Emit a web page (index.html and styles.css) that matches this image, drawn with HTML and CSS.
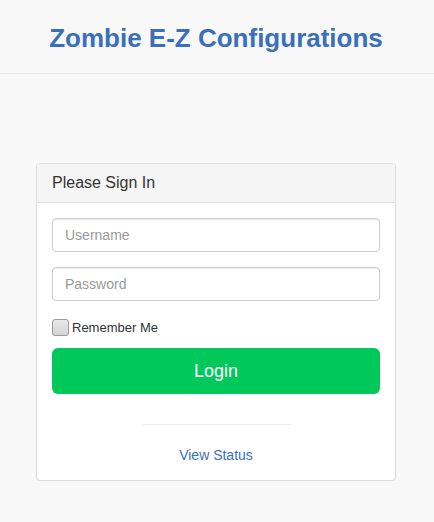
FILE: index.html
```html
<!DOCTYPE html>
<html>
<head>
<meta charset="utf-8">
<link rel="stylesheet" href="styles.css">
</head>
<body>
<header class="topbar">
  <h1 class="title">Zombie E-Z Configurations</h1>
</header>
<main class="main">
  <div class="panel">
    <div class="panel-heading">Please Sign In</div>
    <div class="panel-body">
      <input class="field" type="text" placeholder="Username">
      <input class="field" type="password" placeholder="Password">
      <label class="remember"><input class="check" type="checkbox"><span>Remember Me</span></label>
      <button class="btn-login" type="button">Login</button>
      <hr class="divider">
      <div class="status"><a class="status-link" href="#">View Status</a></div>
    </div>
  </div>
</main>
</body>
</html>
```

FILE: styles.css
```css
html, body {
  margin: 0;
  padding: 0;
  background: #f8f8f8;
  font-family: "Liberation Sans", Arial, sans-serif;
  color: #333;
}
.topbar {
  height: 73px;
  border-bottom: 1px solid #e7e7e7;
  display: flex;
  align-items: center;
  justify-content: center;
  padding-right: 2px;
}
.title {
  margin: 0;
  font-size: 26px;
  font-weight: bold;
  color: #3a6fbb;
  line-height: 1;
  padding-top: 2px;
}
.main {
  padding-top: 89px;
  padding-right: 2px;
  display: flex;
  justify-content: center;
}
.panel {
  width: 358px;
  background: #fff;
  border: 1px solid #ddd;
  border-radius: 4px;
  box-shadow: 0 1px 1px rgba(0,0,0,0.05);
}
.panel-heading {
  background: #f5f5f5;
  border-bottom: 1px solid #ddd;
  border-radius: 3px 3px 0 0;
  padding: 10px 15px;
  font-size: 16px;
  line-height: 18px;
  color: #333;
}
.panel-body {
  padding: 15px 15px 14px;
  display: flex;
  flex-direction: column;
}
.field {
  box-sizing: border-box;
  height: 34px;
  width: 100%;
  margin: 0 0 15px;
  padding: 6px 12px;
  border: 1px solid #ccc;
  border-radius: 4px;
  font-family: "Liberation Sans", Arial, sans-serif;
  font-size: 14px;
  color: #555;
  background: #fff;
  box-shadow: inset 0 1px 1px rgba(0,0,0,0.075);
}
.field::placeholder {
  color: #999;
}
.remember {
  display: flex;
  align-items: center;
  font-size: 13px;
  color: #333;
  margin: 3px 0 13px;
  height: 16px;
}
.check {
  appearance: none;
  -webkit-appearance: none;
  width: 17px;
  height: 17px;
  margin: 0 3px 0 0;
  border: 1px solid #9a9a9a;
  border-radius: 3px;
  background: linear-gradient(#e8e8e8, #d4d4d4);
  box-sizing: border-box;
}
.btn-login {
  height: 46px;
  width: 100%;
  border: 0;
  border-radius: 6px;
  background: #00c85a;
  color: #fff;
  font-family: "Liberation Sans", Arial, sans-serif;
  font-size: 18px;
  padding: 0;
}
.divider {
  width: 149px;
  margin: 30px auto 0;
  border: 0;
  border-top: 1px solid #eee;
  height: 0;
}
.status {
  text-align: center;
  margin-top: 21px;
  padding-bottom: 2px;
}
.status-link {
  color: #3a70c0;
  text-decoration: none;
  font-size: 14px;
}
```
